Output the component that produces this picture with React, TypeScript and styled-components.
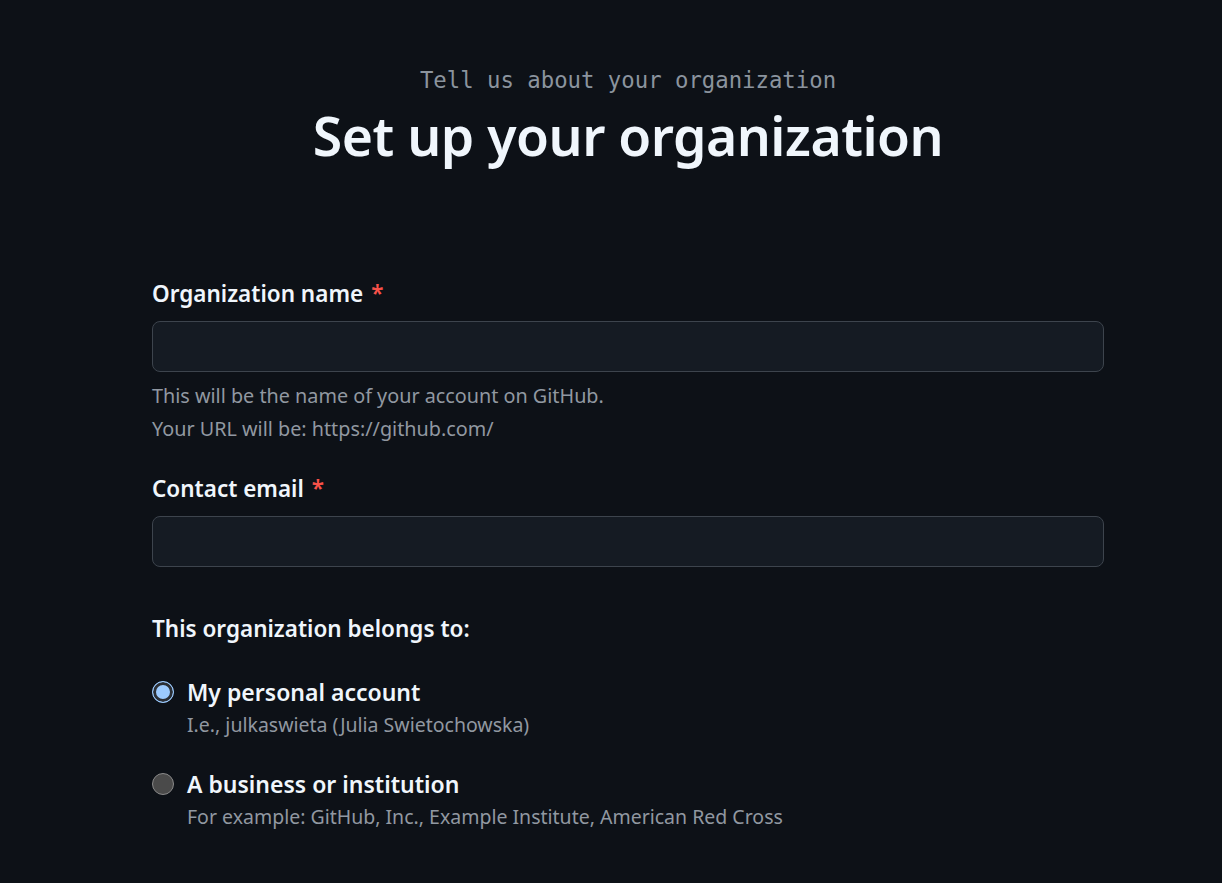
import styled, { createGlobalStyle } from 'styled-components';

const GlobalStyle = createGlobalStyle`
  html, body {
    margin: 0;
    padding: 0;
    background: #0d1117;
  }
  body {
    font-family: "Noto Sans", "Open Sans", sans-serif;
    color: #f0f6fc;
  }
  * {
    box-sizing: border-box;
  }
`;

const Page = styled.main`
  min-height: 883px;
  padding: 64px 0 40px 34px;
`;

const Column = styled.div`
  width: 952px;
  margin: 0 auto;
`;

const Header = styled.header`
  display: flex;
  flex-direction: column;
  align-items: center;
  margin-bottom: 111px;
`;

const Eyebrow = styled.p`
  margin: 0;
  font-family: "DejaVu Sans Mono", "Liberation Mono", monospace;
  font-size: 22.3px;
  line-height: 32px;
  color: #8b949e;
`;

const Title = styled.h1`
  margin: 8px 0 0;
  font-size: 53.5px;
  font-weight: 600;
  line-height: 64px;
  letter-spacing: -0.5px;
  color: #f0f6fc;
`;

const Field = styled.div`
  display: flex;
  flex-direction: column;
  margin-bottom: 29px;
`;

const Label = styled.label`
  font-size: 22.5px;
  font-weight: 600;
  line-height: 30px;
  color: #f0f6fc;
  margin-bottom: 12px;
`;

const Required = styled.span`
  color: #f85149;
  margin-left: 8px;
`;

const Input = styled.input`
  width: 100%;
  height: 51px;
  padding: 0 16px;
  background: #151b23;
  border: 1px solid #3d444d;
  border-radius: 8px;
  color: #f0f6fc;
  font: inherit;
  font-size: 19px;
  outline: none;
`;

const Hint = styled.p`
  margin: 7px 0 0;
  font-size: 19.8px;
  line-height: 33px;
  color: #9198a1;
`;

const Group = styled.div`
  padding-top: 18px;
`;

const GroupTitle = styled.div`
  font-size: 22.5px;
  font-weight: 600;
  line-height: 30px;
  color: #f0f6fc;
  margin-bottom: 32px;
`;

const Option = styled.label`
  display: grid;
  grid-template-columns: 22px 1fr;
  column-gap: 13px;
  margin-bottom: 28px;
  cursor: pointer;
`;

const Radio = styled.span<{ $checked?: boolean }>`
  width: 22px;
  height: 22px;
  margin-top: 5px;
  border-radius: 50%;
  border: ${(p) => (p.$checked ? '1.5px solid #9ccbff' : '1.5px solid #8a8a8a')};
  background: ${(p) => (p.$checked ? '#9ccbff' : '#4a4a4a')};
  box-shadow: ${(p) => (p.$checked ? 'inset 0 0 0 3px #2b2f35' : 'none')};
`;

const OptionTitle = styled.span`
  display: block;
  font-size: 23px;
  font-weight: 600;
  line-height: 32px;
  color: #f0f6fc;
`;

const OptionNote = styled.span`
  display: block;
  margin-top: 2px;
  font-size: 19.5px;
  line-height: 30px;
  color: #9198a1;
`;

export default function App() {
  return (
    <>
      <GlobalStyle />
      <Page>
        <Column>
          <Header>
            <Eyebrow>Tell us about your organization</Eyebrow>
            <Title>Set up your organization</Title>
          </Header>

          <Field>
            <Label>
              Organization name<Required>*</Required>
            </Label>
            <Input type="text" />
            <Hint>
              This will be the name of your account on GitHub.
              <br />
              Your URL will be: https://github.com/
            </Hint>
          </Field>

          <Field>
            <Label>
              Contact email<Required>*</Required>
            </Label>
            <Input type="email" />
          </Field>

          <Group role="radiogroup">
            <GroupTitle>This organization belongs to:</GroupTitle>
            <Option>
              <Radio $checked />
              <span>
                <OptionTitle>My personal account</OptionTitle>
                <OptionNote>I.e., julkaswieta (Julia Swietochowska)</OptionNote>
              </span>
            </Option>
            <Option>
              <Radio />
              <span>
                <OptionTitle>A business or institution</OptionTitle>
                <OptionNote>For example: GitHub, Inc., Example Institute, American Red Cross</OptionNote>
              </span>
            </Option>
          </Group>
        </Column>
      </Page>
    </>
  );
}
